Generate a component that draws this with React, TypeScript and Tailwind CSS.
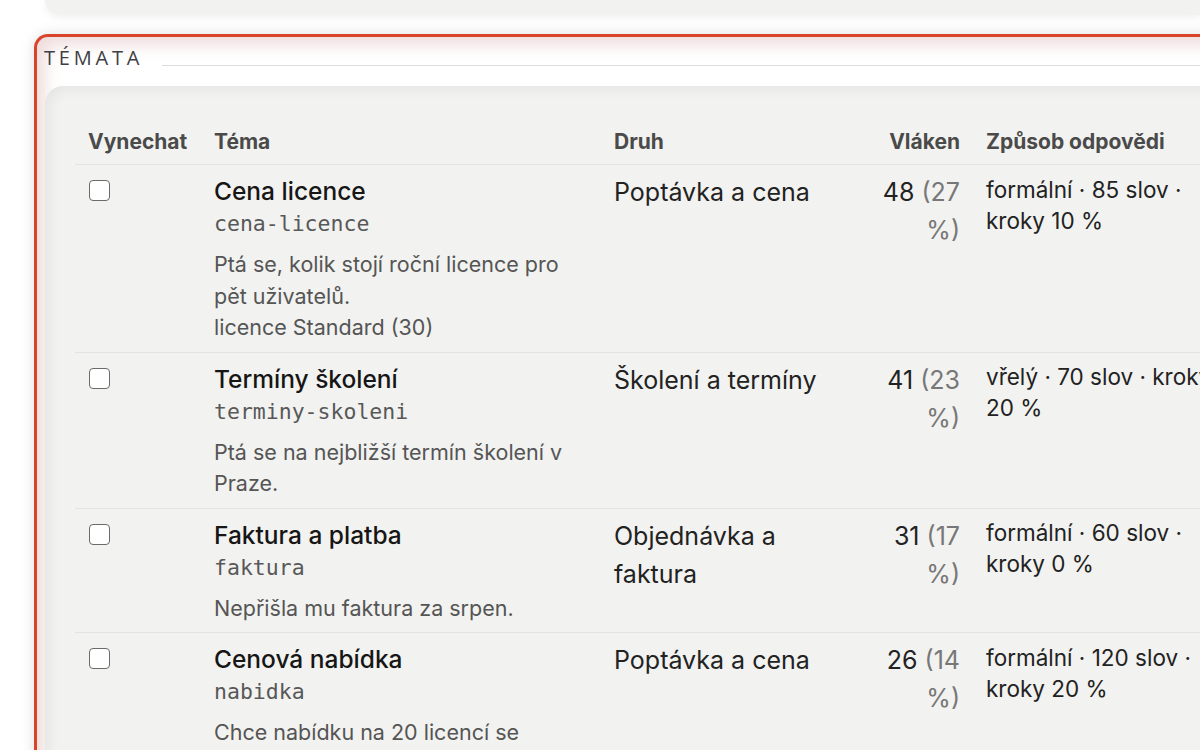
import React from "react";

type Topic = {
  title: string;
  slug: string;
  desc: string[];
  kind: string;
  count: number;
  pct: number;
  style: string;
};

const topics: Topic[] = [
  {
    title: "Cena licence",
    slug: "cena-licence",
    desc: ["Ptá se, kolik stojí roční licence pro pět uživatelů.", "licence Standard (30)"],
    kind: "Poptávka a cena",
    count: 48,
    pct: 27,
    style: "formální · 85 slov · kroky 10 %",
  },
  {
    title: "Termíny školení",
    slug: "terminy-skoleni",
    desc: ["Ptá se na nejbližší termín školení v Praze."],
    kind: "Školení a termíny",
    count: 41,
    pct: 23,
    style: "vřelý · 70 slov · kroky 20 %",
  },
  {
    title: "Faktura a platba",
    slug: "faktura",
    desc: ["Nepřišla mu faktura za srpen."],
    kind: "Objednávka a faktura",
    count: 31,
    pct: 17,
    style: "formální · 60 slov · kroky 0 %",
  },
  {
    title: "Cenová nabídka",
    slug: "nabidka",
    desc: ["Chce nabídku na 20 licencí se slevou pro školy."],
    kind: "Poptávka a cena",
    count: 26,
    pct: 14,
    style: "formální · 120 slov · kroky 20 %",
  },
];

function TopicRow({ t }: { t: Topic }) {
  return (
    <tr className="border-t border-[#e3e3e0] align-top">
      <td className="px-[13px] pt-[12px] pb-[8px]">
        <input
          type="checkbox"
          className="mt-[3px] ml-[1px] block h-[21px] w-[21px] appearance-none rounded-[4px] border-[1.5px] border-[#6b6b6b] bg-white"
        />
      </td>
      <td className="px-[13px] pt-[11px] pb-[8px]">
        <div className="text-[24.5px] leading-[30px] font-medium text-[#161616]">{t.title}</div>
        <div className="font-['DejaVu_Sans_Mono',monospace] text-[21.5px] leading-[35px] text-[#585858]">
          {t.slug}
        </div>
        <div className="mt-[8px] text-[21.5px] leading-[31.5px] text-[#555]">
          {t.desc.map((d) => (
            <div key={d}>{d}</div>
          ))}
        </div>
      </td>
      <td className="px-[13px] pt-[8px] text-[25px] leading-[38px] text-[#222]">{t.kind}</td>
      <td className="px-[13px] pt-[8px] text-right text-[25px] leading-[38px] text-[#222]">
        {t.count} <span className="text-[#777]">({t.pct} %)</span>
      </td>
      <td className="px-[13px] pt-[8.5px] text-[22.5px] leading-[31px] text-[#222]">{t.style}</td>
    </tr>
  );
}

export default function App() {
  return (
    <div className="h-[750px] overflow-hidden bg-white font-['Inter',sans-serif]">
      <div className="ml-[45px] h-[15px] rounded-bl-[20px] bg-[#f2f2f0] shadow-[0_2px_10px_rgba(0,0,0,0.07)]" />

      <section className="mt-[19px] ml-[34px] w-[1220px] rounded-tl-[14px] border-t-[3px] border-l-[3px] border-[#d8432a] bg-white shadow-[0_0_14px_rgba(0,0,0,0.13),inset_8px_8px_16px_rgba(190,110,110,0.24)]">
        <div className="flex items-start pl-[7px] pt-[8px]">
          <span className="font-['Open_Sans',sans-serif] text-[20px] leading-[26px] font-medium tracking-[0.19em] text-[#3f3f44]">
            TÉMATA
          </span>
          <div className="mt-[20px] ml-[19px] h-[1px] flex-1 bg-[#dcdcdc]" />
        </div>

        <div className="mt-[15px] ml-[8px] rounded-tl-[18px] bg-[#f2f2f0] pt-[30px] pl-[30px] shadow-[inset_5px_4px_12px_rgba(0,0,0,0.05)]">
          <table className="w-[1159px] table-fixed border-collapse">
            <colgroup>
              <col className="w-[126px]" />
              <col className="w-[400px]" />
              <col className="w-[259px]" />
              <col className="w-[113px]" />
              <col className="w-[261px]" />
            </colgroup>
            <thead>
              <tr className="text-left text-[21px] leading-[24px] font-bold text-[#4a4a4a]">
                <th className="px-[13px] pt-[14px] pb-[10px] font-bold">Vynechat</th>
                <th className="px-[13px] pt-[14px] pb-[10px] font-bold">Téma</th>
                <th className="px-[13px] pt-[14px] pb-[10px] font-bold">Druh</th>
                <th className="px-[13px] pt-[14px] pb-[10px] text-right font-bold">Vláken</th>
                <th className="px-[13px] pt-[14px] pb-[10px] font-bold whitespace-nowrap">Způsob odpovědi</th>
              </tr>
            </thead>
            <tbody>
              {topics.map((t) => (
                <TopicRow key={t.slug} t={t} />
              ))}
            </tbody>
          </table>
        </div>
      </section>
    </div>
  );
}
